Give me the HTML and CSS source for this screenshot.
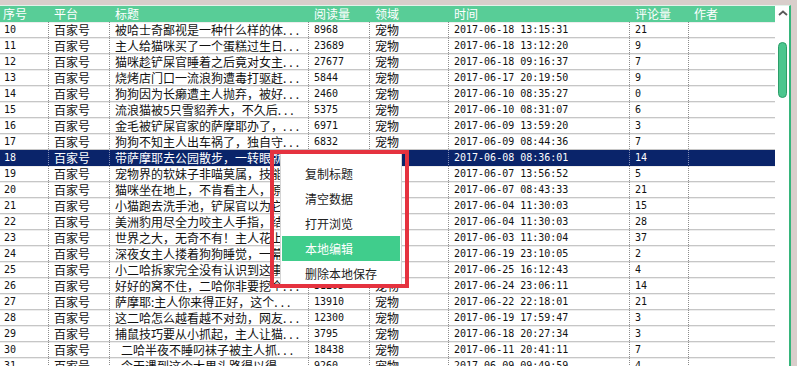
FILE: index.html
```html
<!DOCTYPE HTML>
<html lang="zh">

<head>
    <title>文章列表</title>
    <meta charset="utf-8">
    <link rel="stylesheet" href="styles.css">
</head>

<body>
    <div id="window">
        <div id="list">
            <div class="row head">
                <div class="cell first">序号</div>
                <div class="cell">平台</div>
                <div class="cell">标题</div>
                <div class="cell">阅读量</div>
                <div class="cell">领域</div>
                <div class="cell">时间</div>
                <div class="cell">评论量</div>
                <div class="cell">作者</div>
            </div>
            <div id="rows"></div>

            <div class="menu">
                <div class="item">复制标题</div>
                <div class="item">清空数据</div>
                <div class="item">打开浏览</div>
                <div class="item active">本地编辑</div>
                <div class="item">删除本地保存</div>
            </div>
            <div class="mark"></div>
        </div>

        <div class="scrollbar">
            <svg class="arrow" width="10" height="6" viewBox="0 0 10 6">
                <polyline points="1,5 5,1.5 9,5" fill="none" stroke="#5a5a5a" stroke-width="1.8"/>
            </svg>
            <div class="thumb"></div>
        </div>
    </div>

    <script>
        var rows = [
            [10, '被哈士奇鄙视是一种什么样的体...', 8968, '2017-06-18 13:15:31', 21],
            [11, '主人给猫咪买了一个蛋糕过生日...', 23689, '2017-06-18 13:12:20', 9],
            [12, '猫咪趁铲屎官睡着之后竟对女主...', 27677, '2017-06-18 09:16:37', 7],
            [13, '烧烤店门口一流浪狗遭毒打驱赶...', 5844, '2017-06-17 20:19:50', 9],
            [14, '狗狗因为长癞遭主人抛弃，被好...', 2460, '2017-06-10 08:35:27', 0],
            [15, '流浪猫被5只雪貂养大，不久后...', 5375, '2017-06-10 08:31:07', 6],
            [16, '金毛被铲屎官家的萨摩耶办了，...', 6971, '2017-06-09 13:59:20', 3],
            [17, '狗狗不知主人出车祸了，独自守...', 6832, '2017-06-09 08:44:36', 7],
            [18, '带萨摩耶去公园散步，一转眼就...', 10053, '2017-06-08 08:36:01', 14],
            [19, '宠物界的软妹子非喵莫属，技能...', 4521, '2017-06-07 13:56:52', 5],
            [20, '猫咪坐在地上，不肯看主人，原...', 7733, '2017-06-07 08:43:33', 21],
            [21, '小猫跑去洗手池，铲屎官以为它...', 9012, '2017-06-04 11:30:03', 15],
            [22, '美洲豹用尽全力咬主人手指，结...', 3349, '2017-06-04 11:30:03', 28],
            [23, '世界之大，无奇不有！主人花上...', 15620, '2017-06-03 11:30:04', 37],
            [24, '深夜女主人搂着狗狗睡觉，一幕...', 8421, '2017-06-19 23:10:05', 2],
            [25, '小二哈拆家完全没有认识到这事...', 6610, '2017-06-25 16:12:43', 4],
            [26, '好好的窝不住，二哈你非要挖个...', 31205, '2017-06-24 23:06:11', 14],
            [27, '萨摩耶:主人你来得正好，这个...', 13910, '2017-06-22 22:18:01', 21],
            [28, '这二哈怎么越看越不对劲，网友...', 12300, '2017-06-19 17:59:47', 3],
            [29, '捕鼠技巧要从小抓起，主人让猫...', 3795, '2017-06-18 20:27:34', 3],
            [30, '\u2002二哈半夜不睡叼袜子被主人抓...', 18438, '2017-06-11 20:41:11', 7],
            [31, '\u2002今天遇到这个大男头路得以得...', 9260, '2017-06-09 09:49:59', 4]
        ];

        var html = '';
        rows.forEach(function (r) {
            var title = r[1].replace('...', '<span class="dots">...</span>');
            html += '<div class="row' + (r[0] === 18 ? ' sel' : '') + '">' +
                '<div class="cell first n">' + r[0] + '</div>' +
                '<div class="cell">百家号</div>' +
                '<div class="cell">' + title + '</div>' +
                '<div class="cell n">' + r[2] + '</div>' +
                '<div class="cell">宠物</div>' +
                '<div class="cell n">' + r[3] + '</div>' +
                '<div class="cell n">' + r[4] + '</div>' +
                '<div class="cell"></div>' +
                '</div>';
        });
        document.getElementById('rows').innerHTML = html;
    </script>
</body>

</html>
```

FILE: styles.css
```css
body {
    margin: 0;
    background-color: #d9cecb;
    font-family: "Noto Sans CJK SC", sans-serif;
    font-size: 12px;
    overflow: hidden;
}

#window {
    display: flex;
    width: 789px;
    height: 360px;
    margin-top: 5px;
    background: #fff;
    border-top: 1px solid #e3f3ea;
    border-right: 2px solid #36b57b;
    overflow: hidden;
}

#list {
    position: relative;
    width: 775px;
    flex: none;
}

.row {
    display: grid;
    grid-template-columns: 49px 61px 199px 61px 79px 181px 59px 86px;
    height: 16px;
    box-sizing: border-box;
    border-bottom: 1px solid #c6c6c6;
    box-shadow: inset 0 1px 0 #ededed;
}

.cell {
    padding-left: 5px;
    line-height: 15px;
    color: #111;
    white-space: pre;
    overflow: hidden;
    border-right: 1px dotted #8c8c8c;
}
.cell:last-child {
    border-right: none;
}
.cell.first {
    padding-left: 4px;
}

.n {
    font-family: "DejaVu Sans Mono", monospace;
    font-size: 10px;
}

.dots {
    letter-spacing: 3px;
}

.head {
    background-color: #58cd97;
    border-bottom: none;
    box-shadow: none;
}
.head .cell {
    color: #fff;
    line-height: 16px;
    border-right: none;
}
.head .cell.first {
    padding-left: 3px;
}

.sel {
    background-color: #0a246a;
    border-bottom-color: #0a246a;
    box-shadow: none;
}
.sel .cell {
    color: #fff;
    border-right-color: #8a96bd;
}

/* right click menu */
.menu {
    position: absolute;
    left: 280px;
    top: 147px;
    width: 122px;
    height: 134px;
    box-sizing: border-box;
    padding: 7px 1px 0 1px;
    background: #fff;
    border: 1px solid #d4d4d4;
    overflow: hidden;
}

.item {
    height: 25px;
    line-height: 25px;
    padding-left: 23px;
    color: #222;
    font-size: 12px;
}

.item.active {
    background-color: #40cd8c;
    color: #fff;
}

.mark {
    position: absolute;
    left: 270px;
    top: 144px;
    width: 131px;
    height: 130px;
    border: 4px solid #e5323f;
}

.scrollbar {
    width: 14px;
    flex: none;
    background: #fff;
    position: relative;
}

.arrow {
    display: block;
    margin: 4px 0 0 3px;
}

.thumb {
    width: 9px;
    height: 56px;
    margin: 26px 0 0 3px;
    box-sizing: border-box;
    background-color: #4cc68e;
    border: 1px solid #2d9e69;
    border-radius: 5px;
}
```
